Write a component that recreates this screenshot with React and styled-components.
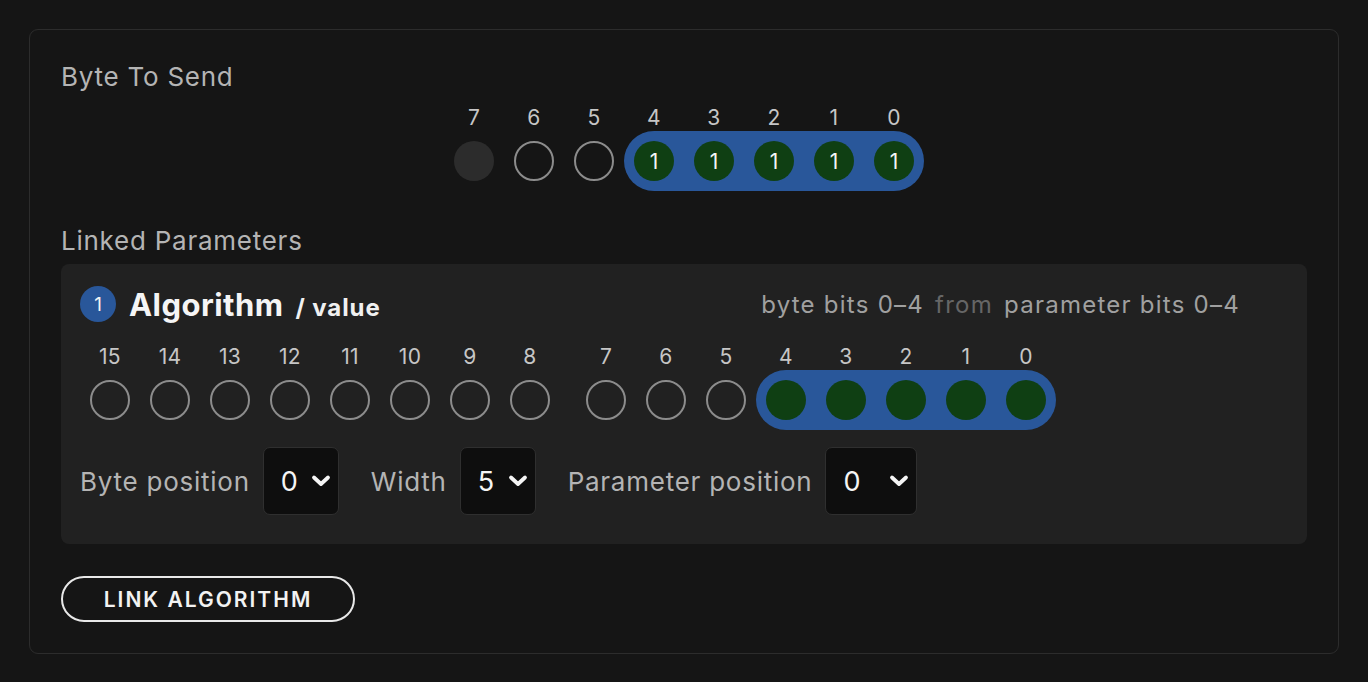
import React from "react";
import styled, { createGlobalStyle } from "styled-components";

const Global = createGlobalStyle`
  html, body { margin: 0; padding: 0; background: #151515; }
  body { font-family: Inter, "Noto Sans", sans-serif; -webkit-font-smoothing: antialiased; }
  * { box-sizing: border-box; }
`;

const Page = styled.div`
  padding: 29px;
`;

const Panel = styled.section`
  border: 1px solid #2c2c2c;
  border-radius: 9px;
  padding: 31px 31px 31px 31px;
  display: flex;
  flex-direction: column;
`;

const SectionTitle = styled.h2`
  margin: 0;
  font-size: 26px;
  line-height: 31px;
  font-weight: 400;
  letter-spacing: 0.75px;
  color: #b4b4b4;
  margin-top: ${(p) => p.$top || 0}px;
`;

const BitGrid = styled.div`
  display: flex;
  flex-direction: column;
  align-self: ${(p) => (p.$center ? "center" : "flex-start")};
  margin-top: ${(p) => p.$top || 0}px;
`;

const BitRow = styled.div`
  display: flex;
  align-items: center;
  gap: ${(p) => p.$gap || 0}px;
`;

const Group = styled.div`
  display: flex;
  align-items: center;
`;

const Label = styled.div`
  width: 60px;
  text-align: center;
  font-size: 21px;
  line-height: 26px;
  letter-spacing: 0.3px;
  color: #c6c6c6;
`;

const Pill = styled.div`
  display: flex;
  align-items: center;
  height: 60px;
  border-radius: 30px;
  background: ${(p) => (p.$on ? "#29579a" : "transparent")};
`;

const Cell = styled.div`
  width: 60px;
  height: 60px;
  display: flex;
  align-items: center;
  justify-content: center;
`;

const Dot = styled.div`
  width: 40px;
  height: 40px;
  border-radius: 50%;
  display: flex;
  align-items: center;
  justify-content: center;
  font-size: 21px;
  color: #f4f4f4;
  border: ${(p) => (p.$kind === "empty" ? "2px solid #8c8c8c" : "none")};
  background: ${(p) =>
    p.$kind === "off" ? "#2c2c2c" : p.$kind === "on" ? "#0f3f13" : "transparent"};
`;

const Card = styled.div`
  margin-top: 8px;
  background: #212121;
  border-radius: 8px;
  padding: 20px 19px 29px 19px;
  display: flex;
  flex-direction: column;
`;

const CardHeader = styled.div`
  display: flex;
  align-items: center;
  justify-content: space-between;
  height: 40px;
  padding-right: 48px;
`;

const HeaderLeft = styled.div`
  display: flex;
  align-items: center;
`;

const Badge = styled.div`
  width: 36px;
  height: 36px;
  border-radius: 50%;
  background: #29579a;
  color: #f2f2f2;
  font-size: 19px;
  display: flex;
  align-items: center;
  justify-content: center;
  margin-right: 13px;
`;

const TitleGroup = styled.div`
  display: flex;
  align-items: baseline;
  gap: 12px;
`;

const ParamName = styled.span`
  font-size: 31px;
  font-weight: 700;
  letter-spacing: 0.45px;
  color: #f5f5f5;
`;

const ParamSub = styled.span`
  font-size: 24px;
  font-weight: 700;
  letter-spacing: 0.9px;
  color: #f0f0f0;
`;

const Mapping = styled.div`
  font-size: 24px;
  letter-spacing: 1.25px;
  color: #a0a0a0;
  display: flex;
  gap: 11px;
`;

const Muted = styled.span`
  color: #666666;
`;

const Controls = styled.div`
  display: flex;
  align-items: center;
  margin-top: 17px;
`;

const Field = styled.div`
  display: flex;
  align-items: center;
  gap: 13px;
  margin-right: 32px;
`;

const FieldLabel = styled.span`
  font-size: 26px;
  letter-spacing: 0.75px;
  color: #b4b4b4;
`;

const SelectBox = styled.div`
  width: ${(p) => p.$w}px;
  height: 68px;
  background: #0e0e0e;
  border: 1px solid #2f2f2f;
  border-radius: 7px;
  display: flex;
  align-items: center;
  justify-content: space-between;
  padding: 0 7px 0 17px;
  font-size: 27px;
  color: #f5f5f5;
`;

const Button = styled.button`
  margin-top: 32px;
  align-self: flex-start;
  width: 294px;
  height: 46px;
  border: 2px solid #e8e8e8;
  border-radius: 23px;
  background: transparent;
  color: #f2f2f2;
  font-family: Inter, "Noto Sans", sans-serif;
  font-size: 21px;
  font-weight: 600;
  letter-spacing: 2px;
  padding: 0;
`;

const Chevron = () => (
  <svg width="20" height="14" viewBox="0 0 20 14">
    <path d="M3 3.5 L10 10 L17 3.5" fill="none" stroke="#f5f5f5" strokeWidth="3.8" strokeLinecap="round" strokeLinejoin="round" />
  </svg>
);

const Select = ({ value, w }) => (
  <SelectBox $w={w}>
    <span>{value}</span>
    <Chevron />
  </SelectBox>
);

function BitBlock({ bits, showOnes }) {
  const off = bits.filter((b) => b.kind !== "on");
  const on = bits.filter((b) => b.kind === "on");
  return (
    <Group>
      {off.map((b) => (
        <Cell key={b.n}>
          <Dot $kind={b.kind} />
        </Cell>
      ))}
      {on.length > 0 && (
        <Pill $on>
          {on.map((b) => (
            <Cell key={b.n}>
              <Dot $kind="on">{showOnes ? "1" : ""}</Dot>
            </Cell>
          ))}
        </Pill>
      )}
    </Group>
  );
}

const byteBits = [
  { n: 7, kind: "off" },
  { n: 6, kind: "empty" },
  { n: 5, kind: "empty" },
  { n: 4, kind: "on" },
  { n: 3, kind: "on" },
  { n: 2, kind: "on" },
  { n: 1, kind: "on" },
  { n: 0, kind: "on" },
];

const paramHigh = [15, 14, 13, 12, 11, 10, 9, 8].map((n) => ({ n, kind: "empty" }));
const paramLow = [7, 6, 5, 4, 3, 2, 1, 0].map((n) => ({ n, kind: n <= 4 ? "on" : "empty" }));

export default function App() {
  return (
    <Page>
      <Global />
      <Panel>
        <SectionTitle>Byte To Send</SectionTitle>
        <BitGrid $center $top={13}>
          <BitRow>
            {byteBits.map((b) => (
              <Label key={b.n}>{b.n}</Label>
            ))}
          </BitRow>
          <BitRow>
            <BitBlock bits={byteBits} showOnes />
          </BitRow>
        </BitGrid>

        <SectionTitle $top={34}>Linked Parameters</SectionTitle>
        <Card>
          <CardHeader>
            <HeaderLeft>
              <Badge>1</Badge>
              <TitleGroup>
                <ParamName>Algorithm</ParamName>
                <ParamSub>/ value</ParamSub>
              </TitleGroup>
            </HeaderLeft>
            <Mapping>
              <span>byte bits 0–4</span>
              <Muted>from</Muted>
              <span>parameter bits 0–4</span>
            </Mapping>
          </CardHeader>
          <BitGrid $top={20}>
            <BitRow $gap={16}>
              <Group>
                {paramHigh.map((b) => (
                  <Label key={b.n}>{b.n}</Label>
                ))}
              </Group>
              <Group>
                {paramLow.map((b) => (
                  <Label key={b.n}>{b.n}</Label>
                ))}
              </Group>
            </BitRow>
            <BitRow $gap={16}>
              <BitBlock bits={paramHigh} />
              <BitBlock bits={paramLow} />
            </BitRow>
          </BitGrid>
          <Controls>
            <Field>
              <FieldLabel>Byte position</FieldLabel>
              <Select value="0" w={76} />
            </Field>
            <Field>
              <FieldLabel>Width</FieldLabel>
              <Select value="5" w={76} />
            </Field>
            <Field>
              <FieldLabel>Parameter position</FieldLabel>
              <Select value="0" w={92} />
            </Field>
          </Controls>
        </Card>
        <Button>LINK ALGORITHM</Button>
      </Panel>
    </Page>
  );
}
